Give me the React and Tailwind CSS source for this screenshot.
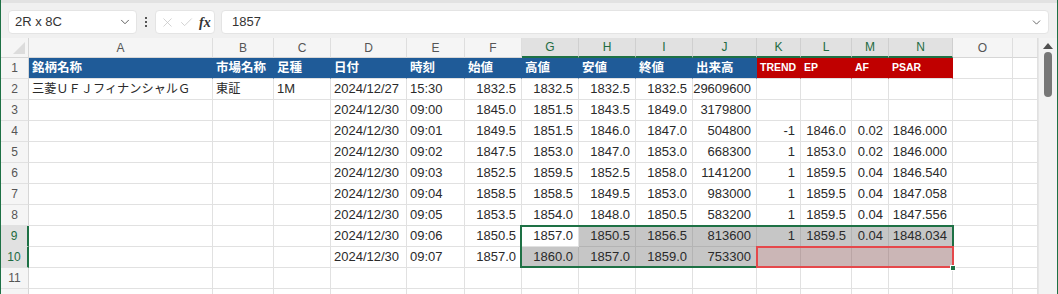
import React from 'react';
import { ChevronDown, X, Check } from 'lucide-react';

const COLS = ['A', 'B', 'C', 'D', 'E', 'F', 'G', 'H', 'I', 'J', 'K', 'L', 'M', 'N', 'O', ''];

const D30 = '2024/12/30';
const ROWS = [
    ['銘柄名称', '市場名称', '足種', '日付', '時刻', '始値', '高値', '安値', '終値', '出来高', 'TREND', 'EP', 'AF', 'PSAR', '', ''],
    ['三菱ＵＦＪフィナンシャルＧ', '東証', '1M', '2024/12/27', '15:30', '1832.5', '1832.5', '1832.5', '1832.5', '29609600', '', '', '', '', '', ''],
    ['', '', '', D30, '09:00', '1845.0', '1851.5', '1843.5', '1849.0', '3179800', '', '', '', '', '', ''],
    ['', '', '', D30, '09:01', '1849.5', '1851.5', '1846.0', '1847.0', '504800', '-1', '1846.0', '0.02', '1846.000', '', ''],
    ['', '', '', D30, '09:02', '1847.5', '1853.0', '1847.0', '1853.0', '668300', '1', '1853.0', '0.02', '1846.000', '', ''],
    ['', '', '', D30, '09:03', '1852.5', '1859.5', '1852.5', '1858.0', '1141200', '1', '1859.5', '0.04', '1846.540', '', ''],
    ['', '', '', D30, '09:04', '1858.5', '1858.5', '1849.5', '1853.0', '983000', '1', '1859.5', '0.04', '1847.058', '', ''],
    ['', '', '', D30, '09:05', '1853.5', '1854.0', '1848.0', '1850.5', '583200', '1', '1859.5', '0.04', '1847.556', '', ''],
    ['', '', '', D30, '09:06', '1850.5', '1857.0', '1850.5', '1856.5', '813600', '1', '1859.5', '0.04', '1848.034', '', ''],
    ['', '', '', D30, '09:07', '1857.0', '1860.0', '1857.0', '1859.0', '753300', '', '', '', '', '', ''],
    ['', '', '', '', '', '', '', '', '', '', '', '', '', '', '', ''],
    ['', '', '', '', '', '', '', '', '', '', '', '', '', '', '', ''],
];

const isSelCol = (c) => c >= 6 && c <= 13;
const isSelRow = (r) => r === 9 || r === 10;

// 行1の見出しセル
const headCell = (c) => {
    if (c <= 9) return 'bg-[#1f5b98] border-r-[#1f5b98] text-white font-bold text-[12.5px] pl-[3px]';
    if (c <= 13) return 'bg-[#c00000] border-r-[#c00000] text-white font-bold text-[10.5px] pl-[3px]';
    return 'bg-white border-r-[#e1e1e1]';
};

const dataCell = (r, c) => {
    const right = c >= 5 ? 'justify-end pr-[5px]' : 'pl-[3px]';
    const size = r === 2 && c <= 1 ? 'text-[12.2px]' : 'text-[13px]';
    let fill = 'bg-white border-r-[#e1e1e1] border-b-[#e1e1e1]';
    if (isSelRow(r) && isSelCol(c) && !(r === 9 && c === 6)) {
        fill = r === 10 && c >= 10
            ? 'bg-[#cbb6b6] border-r-[#baa5a5] border-b-[#baa5a5]'
            : 'bg-[#c6c6c6] border-r-[#b4b4b4] border-b-[#b4b4b4]';
    }
    return `${right} ${size} ${fill} text-[#2a2a2a]`;
};

const Sheet = () => (
    <div className="relative grid grid-cols-[28px_184px_61px_57px_76px_58px_57px_57px_57px_57px_64px_44px_51px_37px_64px_60px_25px] grid-rows-[20px_repeat(12,21px)]">
        {/* 全選択ボタン */}
        <div className="relative bg-[#f5f5f5] border-r border-b border-[#d6d6d6]">
            <div className="absolute right-[3px] bottom-[3px] w-0 h-0 border-l-[12px] border-l-transparent border-b-[12px] border-b-[#dcdcdc]" />
        </div>
        {COLS.map((l, c) => (
            <div
                key={l + c}
                className={`flex items-center justify-center text-[12px] border-r ${
                    isSelCol(c)
                        ? 'bg-[#e1e1e1] text-[#1e6b41] border-r-[#cfcfcf] border-b-2 border-b-[#1e7145]'
                        : 'bg-[#f5f5f5] text-[#555] border-r-[#dedede] border-b border-b-[#d6d6d6]'
                }`}
            >
                {l}
            </div>
        ))}
        {ROWS.map((row, i) => {
            const r = i + 1;
            return (
                <React.Fragment key={r}>
                    <div
                        className={`flex items-center justify-center text-[12px] border-b border-b-[#e1e1e1] ${
                            isSelRow(r)
                                ? 'bg-[#e1e1e1] text-[#1e6b41] border-r-2 border-r-[#1e7145]'
                                : 'bg-[#f5f5f5] text-[#555] border-r border-r-[#d6d6d6]'
                        }`}
                    >
                        {r <= 11 ? r : ''}
                    </div>
                    {row.map((v, c) => (
                        <div
                            key={c}
                            className={`flex items-center whitespace-nowrap overflow-visible border-r border-b ${
                                r === 1 ? `${headCell(c)} border-b-[#e1e1e1]` : dataCell(r, c)
                            }`}
                        >
                            {v}
                        </div>
                    ))}
                </React.Fragment>
            );
        })}
        {/* 選択範囲の枠 */}
        <div className="absolute left-[519px] top-[187px] w-[434px] h-[43px] border-2 border-[#1e7145] pointer-events-none" />
        <div className="absolute left-[755px] top-[208px] w-[198px] h-[22px] border-2 border-[#e5484b] pointer-events-none" />
        <div className="absolute left-[949px] top-[227px] w-[6px] h-[6px] bg-[#1e7145] border border-white" />
    </div>
);

const FormulaBar = () => (
    <div className="h-[38px] bg-[#f0f0f0] border-t-[3px] border-t-[#e2e2e2] flex items-center pt-[3px]">
        <div className="ml-[7px] w-[129px] h-[24px] bg-white rounded-[4px] border border-[#e4e4e4] flex items-center justify-between pl-[6px] pr-[4px] text-[13px] text-[#333]">
            <span>2R x 8C</span>
            <ChevronDown size={14} strokeWidth={1.6} className="text-[#555]" />
        </div>
        <div className="w-[18px] flex flex-col items-center gap-[2px]">
            <span className="w-[2px] h-[2px] bg-[#555]" />
            <span className="w-[2px] h-[2px] bg-[#555]" />
            <span className="w-[2px] h-[2px] bg-[#555]" />
        </div>
        <div className="w-[60px] h-[24px] bg-white rounded-[4px] border border-[#e4e4e4] flex items-center pl-[4px]">
            <X size={15} strokeWidth={1.2} className="text-[#c4c4c4]" />
            <Check size={15} strokeWidth={1.2} className="ml-[4px] text-[#c4c4c4]" />
            <span className="ml-[5px] text-[14px] italic font-bold text-[#333] font-['Liberation_Serif',serif]">fx</span>
        </div>
        <div className="ml-[6px] w-[828px] h-[24px] bg-white rounded-[4px] border border-[#e4e4e4] flex items-center justify-between pl-[10px] pr-[5px] text-[13px] text-[#333]">
            <span>1857</span>
            <ChevronDown size={13} strokeWidth={1.6} className="text-[#555]" />
        </div>
    </div>
);

export default function App() {
    return (
        <div className="w-[1058px] h-[294px] overflow-hidden bg-white border-l border-r border-[#1e7145] font-['Liberation_Sans','Noto_Sans_CJK_JP',sans-serif]">
            <FormulaBar />
            <div className="flex">
                <Sheet />
                <div className="flex-1 bg-[#f3f3f3] border-l border-[#e6e6e6] flex flex-col items-center pt-[5px]">
                    <div className="w-0 h-0 border-l-[5px] border-r-[5px] border-b-[6px] border-l-transparent border-r-transparent border-b-[#505050]" />
                    <div className="mt-[3px] w-[8px] h-[45px] rounded-full bg-[#777]" />
                </div>
            </div>
        </div>
    );
}
